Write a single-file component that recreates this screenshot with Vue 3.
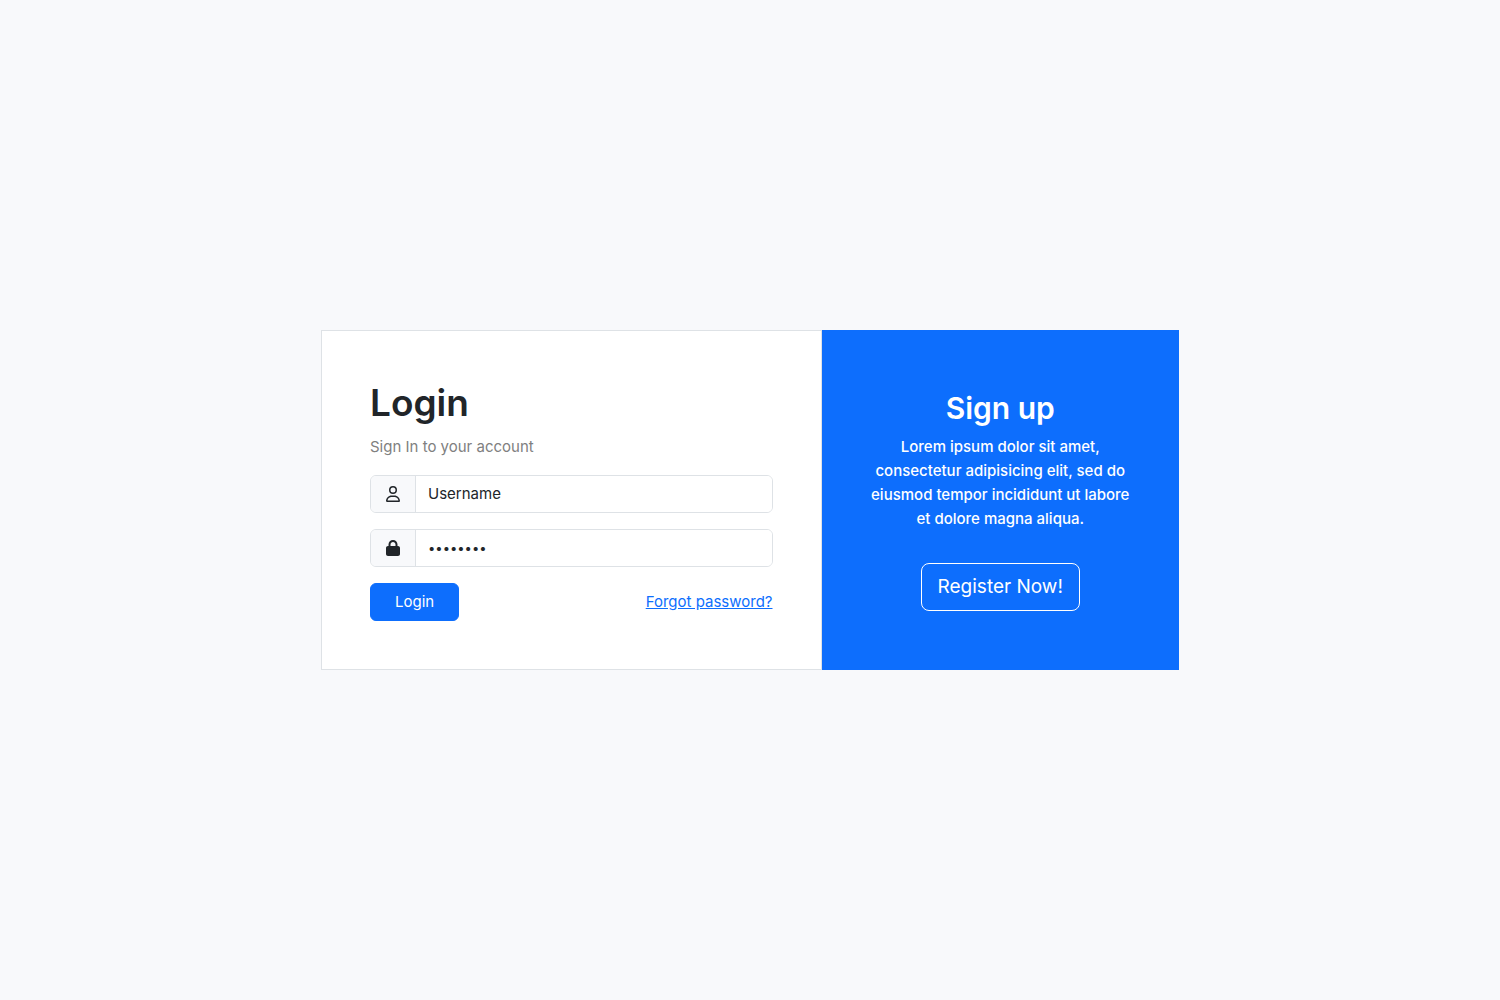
<script setup>
import { ref } from 'vue'

const username = ref('')
const password = ref('password')
</script>

<template>
  <main class="page">
    <div class="card-group">
      <section class="card login">
        <h1>Login</h1>
        <p class="lead">Sign In to your account</p>
        <form @submit.prevent>
          <div class="input-group">
            <label class="addon" for="username" aria-label="Username">
              <svg class="icon" viewBox="0 0 448 512" aria-hidden="true">
                <path d="M304 128a80 80 0 1 0-160 0 80 80 0 1 0 160 0zM96 128a128 128 0 1 1 256 0A128 128 0 1 1 96 128zM49.3 464H398.7c-8.9-63.3-63.3-112-129-112H178.3c-65.7 0-120.1 48.7-129 112zM0 482.3C0 383.8 79.8 304 178.3 304h91.4C368.2 304 448 383.8 448 482.3c0 16.4-13.3 29.7-29.7 29.7H29.7C13.3 512 0 498.7 0 482.3z" />
              </svg>
            </label>
            <input id="username" v-model="username" type="text" placeholder="Username" />
          </div>
          <div class="input-group">
            <label class="addon" for="password" aria-label="Password">
              <svg class="icon" viewBox="0 0 448 512" aria-hidden="true">
                <path d="M144 144v48H304V144c0-44.2-35.8-80-80-80s-80 35.8-80 80zM80 192V144C80 64.5 144.5 0 224 0s144 64.5 144 144v48h16c35.3 0 64 28.7 64 64V448c0 35.3-28.7 64-64 64H64c-35.3 0-64-28.7-64-64V256c0-35.3 28.7-64 64-64H80z" />
              </svg>
            </label>
            <input id="password" v-model="password" class="secret" type="password" />
          </div>
          <div class="actions">
            <button class="btn primary" type="submit">Login</button>
            <a class="forgot" href="#">Forgot password?</a>
          </div>
        </form>
      </section>
      <section class="card signup">
        <h2>Sign up</h2>
        <p>Lorem ipsum dolor sit amet, consectetur adipisicing elit, sed do eiusmod tempor incididunt ut labore et dolore magna aliqua.</p>
        <button class="btn outline" type="button">Register Now!</button>
      </section>
    </div>
  </main>
</template>

<style>
body {
  background: #f8f9fb;
}
</style>

<style scoped>
.page {
  display: flex;
  align-items: center;
  justify-content: center;
  min-height: 100vh;
  color: #212529;
  font-family: Inter, "Liberation Sans", sans-serif;
  font-size: 15px;
  line-height: 24px;
}

.card-group {
  display: grid;
  grid-template-columns: 7fr 5fr;
  width: 100%;
  max-width: 858px;
}

.card {
  box-sizing: border-box;
  min-width: 0;
}

.login {
  padding: 48px;
  border: 1px solid #dee2e6;
  background: #fff;
}

.signup {
  display: flex;
  flex-direction: column;
  align-items: center;
  justify-content: center;
  padding: 48px 44px;
  background: #0d6efd;
  color: #fff;
  font-weight: 500;
  text-align: center;
}

h1,
h2,
p {
  margin: 0;
}

h1 {
  margin-bottom: 8px;
  font-size: 37px;
  font-weight: 600;
  line-height: 48px;
}

h2 {
  margin-bottom: 8px;
  font-size: 30px;
  font-weight: 600;
  line-height: 38px;
}

.lead {
  margin-bottom: 16px;
  color: #808080;
}

.input-group {
  display: flex;
  box-sizing: border-box;
  height: 38px;
  margin-bottom: 16px;
  overflow: hidden;
  border: 1px solid #dee2e6;
  border-radius: 6px;
}

.addon {
  display: flex;
  flex: none;
  align-items: center;
  justify-content: center;
  width: 44px;
  border-right: 1px solid #dee2e6;
  background: #f8f9fb;
}

.icon {
  width: 14px;
  height: 16px;
  fill: currentColor;
}

input {
  flex: 1;
  min-width: 0;
  padding: 0 12px;
  border: 0;
  background: #fff;
  color: inherit;
  font: inherit;
}

input::placeholder {
  color: #212529;
  opacity: 1;
}

.secret {
  font-size: 13px;
}

.actions {
  display: flex;
  align-items: center;
  justify-content: space-between;
}

.btn {
  border: 1px solid #0d6efd;
  border-radius: 6px;
  background: #0d6efd;
  color: #fff;
  font: inherit;
  cursor: pointer;
}

.primary {
  padding: 6px 24px;
}

.outline {
  margin-top: 32px;
  padding: 8px 16px;
  border-color: #fff;
  border-radius: 8px;
  font-size: 19px;
  font-weight: 400;
  line-height: 30px;
}

.forgot {
  color: #0d6efd;
}
</style>
